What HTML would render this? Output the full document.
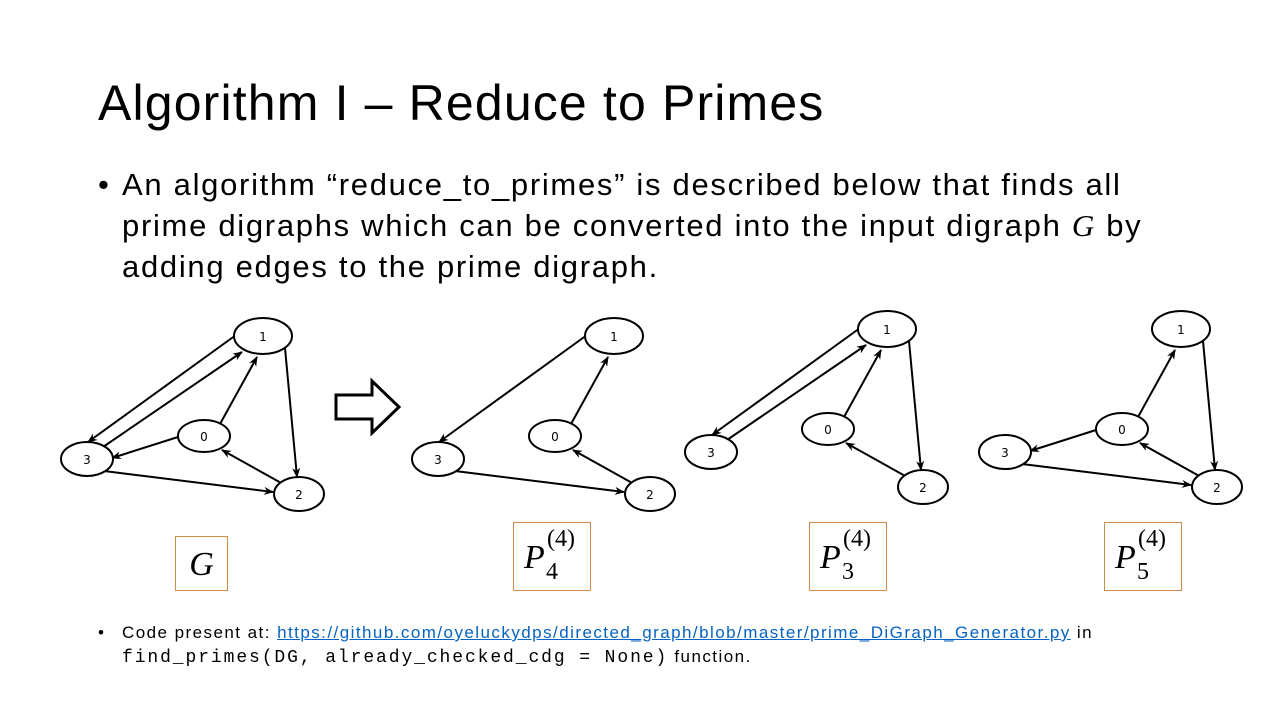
<!DOCTYPE html>
<html><head><meta charset="utf-8"><style>
body{margin:0;width:1280px;height:720px;background:#fff;position:relative;overflow:hidden;font-family:"Liberation Sans",sans-serif;color:#000}
.t{position:absolute;left:98px;top:74px;font-size:50px;font-weight:300;letter-spacing:1.15px;white-space:nowrap}
.b{position:absolute;left:98px;top:164px;font-size:31px;line-height:41px;white-space:nowrap}
.b .d{position:absolute;left:0}
.b .x{margin-left:24px;display:block;letter-spacing:1.7px}
.box{position:absolute;border:1px solid #d08a4a;font-family:"Liberation Serif",serif;font-style:italic;font-size:34px}
.s{position:absolute;left:98px;top:621px;font-size:17px;line-height:24px;letter-spacing:1.45px}
a{color:#0563c1;text-decoration:underline}
code{font-family:"Liberation Mono",monospace;font-size:18px;letter-spacing:1.9px}
</style></head><body>
<div class="t">Algorithm I – Reduce to Primes</div>
<div class="b"><span class="d">•</span><span class="x">An algorithm “reduce_to_primes” is described below that finds all<br>prime digraphs which can be converted into the input digraph <i style="font-family:'Liberation Serif',serif">G</i> by<br>adding edges to the prime digraph.</span></div>
<svg width="1280" height="720" style="position:absolute;left:0;top:0">
<defs><marker id="a" markerWidth="10" markerHeight="8" refX="9" refY="4" orient="auto" markerUnits="userSpaceOnUse"><path d="M0,0 L10,4 L0,8 L3,4z" fill="#000"/></marker></defs>
<g stroke="#000" stroke-width="2" fill="none" font-family="DejaVu Sans" font-size="12">
<g id="G">
<line x1="236" y1="335" x2="88" y2="442" marker-end="url(#a)"/>
<line x1="103" y1="447" x2="242" y2="352" marker-end="url(#a)"/>
<line x1="220" y1="424" x2="257" y2="357" marker-end="url(#a)"/>
<line x1="178" y1="437" x2="112" y2="458" marker-end="url(#a)"/>
<line x1="283" y1="484" x2="222" y2="450" marker-end="url(#a)"/>
<line x1="285" y1="348" x2="297" y2="477" marker-end="url(#a)"/>
<line x1="104" y1="471" x2="273" y2="492" marker-end="url(#a)"/>
</g>
<g transform="translate(351,0)">
<line x1="236" y1="335" x2="88" y2="442" marker-end="url(#a)"/>
<line x1="220" y1="424" x2="257" y2="357" marker-end="url(#a)"/>
<line x1="283" y1="484" x2="222" y2="450" marker-end="url(#a)"/>
<line x1="104" y1="471" x2="273" y2="492" marker-end="url(#a)"/>
</g>
<g transform="translate(624,-7)">
<line x1="236" y1="335" x2="88" y2="442" marker-end="url(#a)"/>
<line x1="103" y1="447" x2="242" y2="352" marker-end="url(#a)"/>
<line x1="220" y1="424" x2="257" y2="357" marker-end="url(#a)"/>
<line x1="283" y1="484" x2="222" y2="450" marker-end="url(#a)"/>
<line x1="285" y1="348" x2="297" y2="477" marker-end="url(#a)"/>
</g>
<g transform="translate(918,-7)">
<line x1="220" y1="424" x2="257" y2="357" marker-end="url(#a)"/>
<line x1="178" y1="437" x2="112" y2="458" marker-end="url(#a)"/>
<line x1="283" y1="484" x2="222" y2="450" marker-end="url(#a)"/>
<line x1="285" y1="348" x2="297" y2="477" marker-end="url(#a)"/>
<line x1="104" y1="471" x2="273" y2="492" marker-end="url(#a)"/>
</g>
<g id="N" fill="#fff">
<ellipse cx="263" cy="336" rx="29" ry="18"/><ellipse cx="204" cy="436" rx="26" ry="16"/>
<ellipse cx="87" cy="459" rx="26" ry="17"/><ellipse cx="299" cy="494" rx="25" ry="17"/>
<g stroke="none" fill="#000" text-anchor="middle"><text x="263" y="341">1</text><text x="204" y="441">0</text><text x="87" y="464">3</text><text x="299" y="499">2</text></g>
</g>
<use href="#N" transform="translate(351,0)"/>
<use href="#N" transform="translate(624,-7)"/>
<use href="#N" transform="translate(918,-7)"/>
<path d="M336,395 L372,395 L372,381 L399,407 L372,433 L372,419 L336,419 Z" stroke-width="3"/>
</g>
</svg>
<div class="box" style="left:175px;top:536px;width:51px;height:53px;line-height:56px;text-align:center">G</div>
<div class="box" style="left:513px;top:522px;width:76px;height:67px"><span style="position:absolute;left:10px;top:16px">P</span><span style="position:absolute;left:32px;top:36px;font-style:normal;font-size:24px">4</span><span style="position:absolute;left:33px;top:3px;font-style:normal;font-size:24px">(4)</span></div>
<div class="box" style="left:809px;top:522px;width:76px;height:67px"><span style="position:absolute;left:10px;top:16px">P</span><span style="position:absolute;left:32px;top:36px;font-style:normal;font-size:24px">3</span><span style="position:absolute;left:33px;top:3px;font-style:normal;font-size:24px">(4)</span></div>
<div class="box" style="left:1104px;top:522px;width:76px;height:67px"><span style="position:absolute;left:10px;top:16px">P</span><span style="position:absolute;left:32px;top:36px;font-style:normal;font-size:24px">5</span><span style="position:absolute;left:33px;top:3px;font-style:normal;font-size:24px">(4)</span></div>
<div class="s"><span style="position:absolute;left:0;letter-spacing:0">•</span><div style="margin-left:24px;white-space:nowrap">Code present at: <a>https://github.com/oyeluckydps/directed_graph/blob/master/prime_DiGraph_Generator.py</a> in<br><code>find_primes(DG, already_checked_cdg = None)</code> function.</div></div>
</body></html>
